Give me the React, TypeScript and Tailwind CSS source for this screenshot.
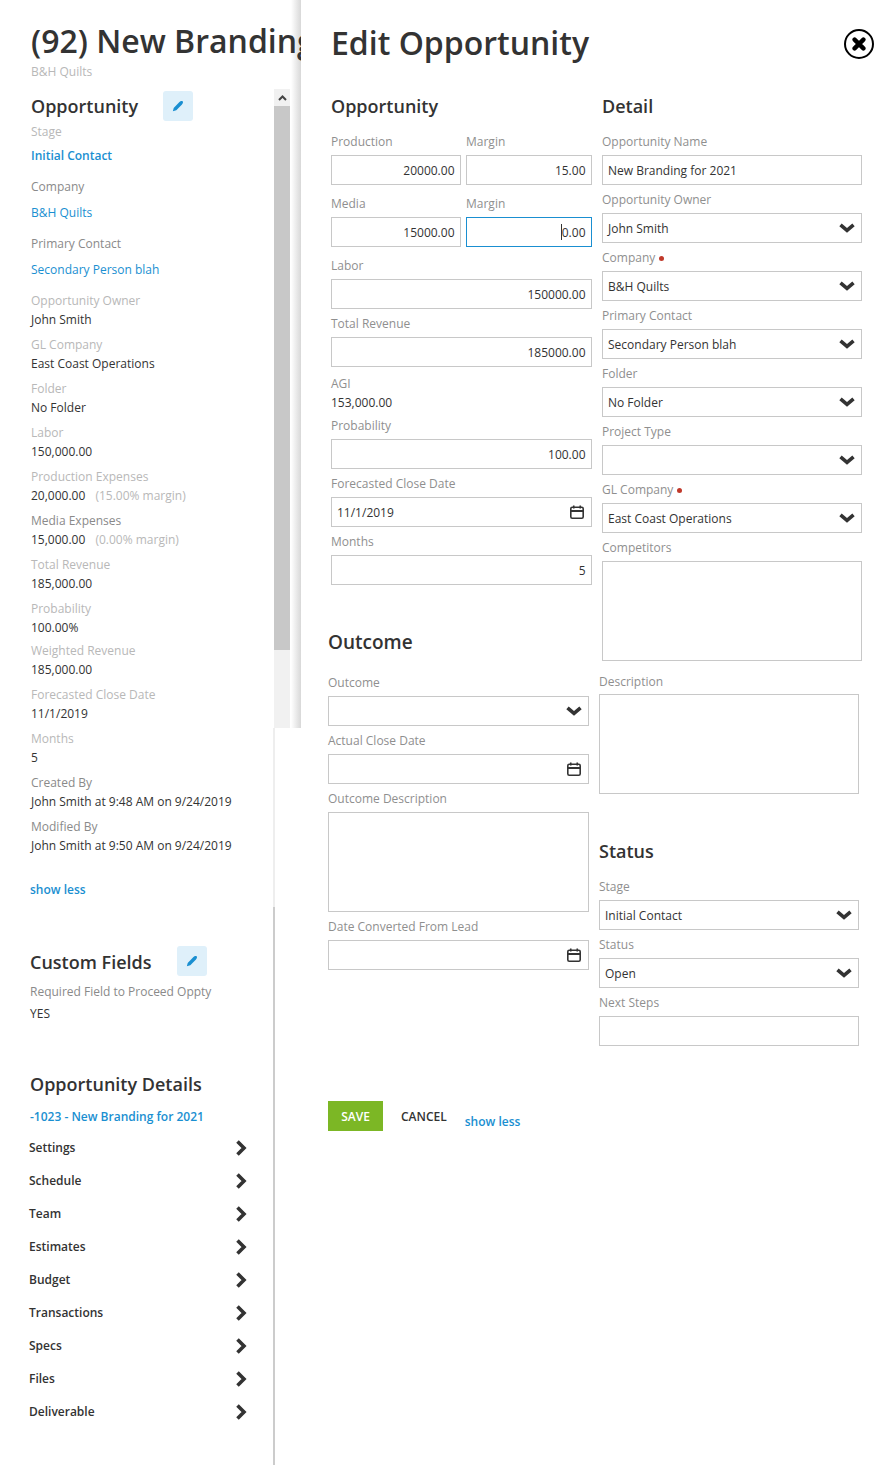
import React from "react";

const font = { fontFamily: '"Open Sans", sans-serif' };

function Pencil({ className }: { className: string }) {
  return (
    <button className={`flex h-[30px] w-[30px] items-center justify-center rounded-[3px] bg-[#dff0fa] ${className}`}>
      <svg width="12" height="12" viewBox="0 0 14 14" fill="#1a8fd1">
        <path d="M1 13.2L2 9.2 8.4 2.6C9.6 1.4 11.4 0.6 12.4 1.4 13.4 2.4 12.6 4.2 11.4 5.4L5 12Z" />
      </svg>
    </button>
  );
}

function ChevronDown() {
  return (
    <svg width="16" height="10" viewBox="0 0 16 10" fill="none" stroke="#333" strokeWidth="3.6">
      <path d="M1.5 1.8L8 7.4l6.5-5.6" />
    </svg>
  );
}

function ChevronRight() {
  return (
    <svg width="12" height="16" viewBox="0 0 12 16" fill="none" stroke="#333" strokeWidth="3.6">
      <path d="M2.5 1.5L9 8l-6.5 6.5" />
    </svg>
  );
}

function Heading({ children, className = "" }: { children: React.ReactNode; className?: string }) {
  return <h2 className={`leading-[26px] font-semibold text-[#333] ${className.includes("text-[") ? "" : "text-[18px]"} ${className}`}>{children}</h2>;
}

function Item({ label, value, dark, mb = "mb-[6px]" }: { label: string; value: React.ReactNode; dark?: boolean; mb?: string }) {
  return (
    <div className={mb}>
      <div className={`text-[12px] leading-[19px] ${dark ? "text-[#8a8a8a]" : "text-[#b8b8b8]"}`}>{label}</div>
      <div className="text-[12px] leading-[19px] text-[#333]">{value}</div>
    </div>
  );
}

function LinkItem({ label, value, dark, semi, gap = "mt-[7px]" }: { label: string; value: string; dark?: boolean; semi?: boolean; gap?: string }) {
  return (
    <div className="mb-[12px]">
      <div className={`text-[12px] leading-[19px] ${dark ? "text-[#8a8a8a]" : "text-[#b8b8b8]"}`}>{label}</div>
      <div className={`${gap} text-[12px] leading-[19px] text-[#1a8fd1] ${semi ? "font-semibold" : ""}`}>{value}</div>
    </div>
  );
}

function Field({ label, required, mb = "mb-[6px]", lb = "mb-[4px]", children }: { label: string; required?: boolean; mb?: string; lb?: string; children: React.ReactNode }) {
  return (
    <div className={mb}>
      <div className={`${lb} flex h-[18px] items-center text-[12px] text-[#8f8f8f]`}>
        {label}
        {required && <span className="ml-[4px] h-[5px] w-[5px] rounded-full bg-[#c0392b]" />}
      </div>
      {children}
    </div>
  );
}

function Input({ value = "", right, focused }: { value?: string; right?: boolean; focused?: boolean }) {
  return (
    <div className="relative">
      <input
        readOnly
        value={value}
        className={`block h-[30px] w-full border bg-white text-[12px] text-[#333] outline-none ${right ? "px-[5.5px] text-right" : "px-[5px]"} ${focused ? "border-[#1a8fd1]" : "border-[#c8c8c8]"}`}
      />
      {focused && <span className="absolute top-[7px] right-[30px] h-[16px] w-px bg-[#333]" />}
    </div>
  );
}

function Select({ value = "" }: { value?: string }) {
  return (
    <div className="flex h-[30px] items-center justify-between border border-[#c8c8c8] bg-white pr-[6px] pl-[5px] text-[12px] text-[#333]">
      <span className="pt-[2px]">{value}</span>
      <ChevronDown />
    </div>
  );
}

function DateInput({ value = "" }: { value?: string }) {
  return (
    <div className="flex h-[30px] items-center justify-between border border-[#c8c8c8] bg-white pr-[7px] pl-[5px] text-[12px] text-[#333]">
      <span className="pt-[2px]">{value}</span>
      <svg width="14" height="14" viewBox="0 0 14 14" fill="none" stroke="#333" strokeWidth="1.6">
        <rect x="0.8" y="2.3" width="12.4" height="10.9" rx="1.4" />
        <path d="M1 6h12" strokeWidth="2" />
        <path d="M3.75 0.5v3M10.25 0.5v3" />
      </svg>
    </div>
  );
}

function Area({ mb = "" }: { mb?: string }) {
  return <div className={`h-[100px] border border-[#c8c8c8] bg-white ${mb}`} />;
}

const navItems = ["Settings", "Schedule", "Team", "Estimates", "Budget", "Transactions", "Specs", "Files", "Deliverable"];

export default function App() {
  return (
    <div className="relative h-[1465px] w-full overflow-hidden bg-white text-[#333]" style={font}>
      {/* background record page */}
      <div className="w-[274px] pt-[19px] pl-[31px]">
        <h1 className="relative z-10 text-[32px] leading-[44px] font-semibold whitespace-nowrap text-[#333]">(92) New Branding for 2021</h1>
        <div className="text-[12px] leading-[18px] text-[#b8b8b8]">B&amp;H Quilts</div>

        <div className="relative mt-[10px] h-[30px]">
          <Heading className="pt-[2px]">Opportunity</Heading>
          <Pencil className="absolute top-0 left-[132px]" />
        </div>

        <div className="mt-[1px]">
          <LinkItem label="Stage" value="Initial Contact" semi gap="mt-[5px]" />
          <LinkItem label="Company" value="B&H Quilts" dark />
          <LinkItem label="Primary Contact" value="Secondary Person blah" dark />
          <Item label="Opportunity Owner" value="John Smith" />
          <Item label="GL Company" value="East Coast Operations" />
          <Item label="Folder" value="No Folder" />
          <Item label="Labor" value="150,000.00" />
          <Item label="Production Expenses" value={<>20,000.00 <span className="ml-[7px] text-[#b8b8b8]">(15.00% margin)</span></>} />
          <Item label="Media Expenses" value={<>15,000.00 <span className="ml-[7px] text-[#b8b8b8]">(0.00% margin)</span></>} dark />
          <Item label="Total Revenue" value="185,000.00" />
          <Item label="Probability" value="100.00%" mb="mb-[4px]" />
          <Item label="Weighted Revenue" value="185,000.00" />
          <Item label="Forecasted Close Date" value="11/1/2019" />
          <Item label="Months" value="5" />
          <Item label="Created By" value="John Smith at 9:48 AM on 9/24/2019" dark />
          <Item label="Modified By" value="John Smith at 9:50 AM on 9/24/2019" dark />
        </div>

        <div className="-ml-px pt-[20px] text-[12px] leading-[18px] font-semibold text-[#1a8fd1]">show less</div>

        <div className="relative -ml-px mt-[47px] h-[30px]">
          <Heading className="pt-[3px]">Custom Fields</Heading>
          <Pencil className="absolute top-0 left-[147px]" />
        </div>
        <div className="-ml-px mt-[6px] text-[12px] leading-[20px] text-[#8a8a8a]">Required Field to Proceed Oppty</div>
        <div className="-ml-px mt-[2px] text-[12px] leading-[20px] text-[#333]">YES</div>

        <Heading className="-ml-px mt-[47px]">Opportunity Details</Heading>
        <div className="-ml-px mt-[10px] text-[12px] leading-[20px] font-semibold text-[#1a8fd1]">-1023 - New Branding for 2021</div>

        <div className="-ml-[2px] mt-[4px] w-[218px]">
          {navItems.map((n) => (
            <div key={n} className="flex h-[33px] items-center justify-between text-[12px] font-semibold text-[#333]">
              <span>{n}</span>
              <ChevronRight />
            </div>
          ))}
        </div>
      </div>

      {/* page scrollbar pieces lying over the record page */}
      <div className="absolute top-[89px] left-[274px] h-[639px] w-[16px] bg-[#f1f1f1]">
        <div className="flex h-[17px] items-center justify-center">
          <svg width="9" height="6" viewBox="0 0 9 6" fill="none" stroke="#444" strokeWidth="2"><path d="M1 5l3.5-3.5L8 5" /></svg>
        </div>
        <div className="h-[544px] bg-[#c8c8c8]" />
      </div>
      <div className="absolute top-[728px] left-[273px] h-[179px] w-[2px] bg-[#eeeeee]" />
      <div className="absolute top-[907px] bottom-0 left-[273px] w-[2px] bg-[#cccccc]" />
      <div className="absolute top-0 left-[291px] h-[728px] w-[10px] bg-linear-to-r from-white to-[#d8d8d8]" />

      {/* edit drawer */}
      <div className="absolute top-0 right-0 bottom-0 left-[301px] z-20 bg-white">
        <div className="flex h-[91px] items-start justify-between pt-[19px] pr-[3px] pl-[30px]">
          <h1 className="text-[32px] leading-[48px] font-semibold text-[#333]">Edit Opportunity</h1>
          <div className="mt-[10px] flex h-[30px] w-[30px] items-center justify-center rounded-full border-[2.5px] border-black">
            <svg width="14" height="14" viewBox="0 0 14 14" fill="none" stroke="#000" strokeWidth="4.4" strokeLinecap="round">
              <path d="M2.6 2.6l8.8 8.8M11.4 2.6l-8.8 8.8" />
            </svg>
          </div>
        </div>

        <div className="grid grid-cols-[261px_260px] gap-x-[10px] pl-[30px]">
          <div>
            <Heading className="h-[42px] pt-[2px]">Opportunity</Heading>
            <div className="grid grid-cols-[130px_126px] gap-x-[5px]">
              <Field label="Production" mb="mb-[10px]"><Input value="20000.00" right /></Field>
              <Field label="Margin" mb="mb-[10px]"><Input value="15.00" right /></Field>
              <Field label="Media" mb="mb-[10px]"><Input value="15000.00" right /></Field>
              <Field label="Margin" mb="mb-[10px]"><Input value="0.00" right focused /></Field>
            </div>
            <Field label="Labor"><Input value="150000.00" right /></Field>
            <Field label="Total Revenue" mb="mb-[8px]"><Input value="185000.00" right /></Field>
            <div className="mb-[5px] text-[12px] leading-[18px] text-[#8f8f8f]">AGI</div>
            <div className="mb-[5px] mt-[-5px] pt-px text-[12px] leading-[18px] text-[#333]">153,000.00</div>
            <Field label="Probability"><Input value="100.00" right /></Field>
            <Field label="Forecasted Close Date"><DateInput value="11/1/2019" /></Field>
            <Field label="Months"><Input value="5" right /></Field>
          </div>

          <div>
            <Heading className="h-[42px] pt-[2px]">Detail</Heading>
            <Field label="Opportunity Name"><Input value="New Branding for 2021" /></Field>
            <Field label="Opportunity Owner"><Select value="John Smith" /></Field>
            <Field label="Company" required><Select value="B&H Quilts" /></Field>
            <Field label="Primary Contact"><Select value="Secondary Person blah" /></Field>
            <Field label="Folder"><Select value="No Folder" /></Field>
            <Field label="Project Type"><Select /></Field>
            <Field label="GL Company" required><Select value="East Coast Operations" /></Field>
            <Field label="Competitors" mb=""><Area /></Field>
          </div>
        </div>

        <div className="-ml-[3px] grid grid-cols-[261px_260px] gap-x-[10px] pl-[30px]">
          <div className="-mt-[32px]">
            <Heading className="mb-[19px] h-[26px] text-[19px]">Outcome</Heading>
            <Field label="Outcome"><Select /></Field>
            <Field label="Actual Close Date"><DateInput /></Field>
            <Field label="Outcome Description"><Area mb="mb-[6px]" /></Field>
            <Field label="Date Converted From Lead" mb=""><DateInput /></Field>
          </div>
          <div className="pt-[12px]">
            <Field label="Description" mb="" lb="mb-[3px]"><Area /></Field>
            <Heading className="mt-[44px] mb-[14px]">Status</Heading>
            <Field label="Stage"><Select value="Initial Contact" /></Field>
            <Field label="Status"><Select value="Open" /></Field>
            <Field label="Next Steps" mb=""><Input /></Field>
          </div>
        </div>

        <div className="mt-[55px] flex items-start pl-[27px]">
          <button className="h-[30px] w-[55px] bg-[#7cb725] pt-[2px] text-[12px] font-semibold text-white">SAVE</button>
          <button className="ml-[18px] h-[30px] pt-[2px] text-[12px] font-semibold text-[#333]">CANCEL</button>
          <span className="mt-[12px] ml-[18px] text-[12px] leading-[18px] font-semibold text-[#1a8fd1]">show less</span>
        </div>
      </div>
    </div>
  );
}
